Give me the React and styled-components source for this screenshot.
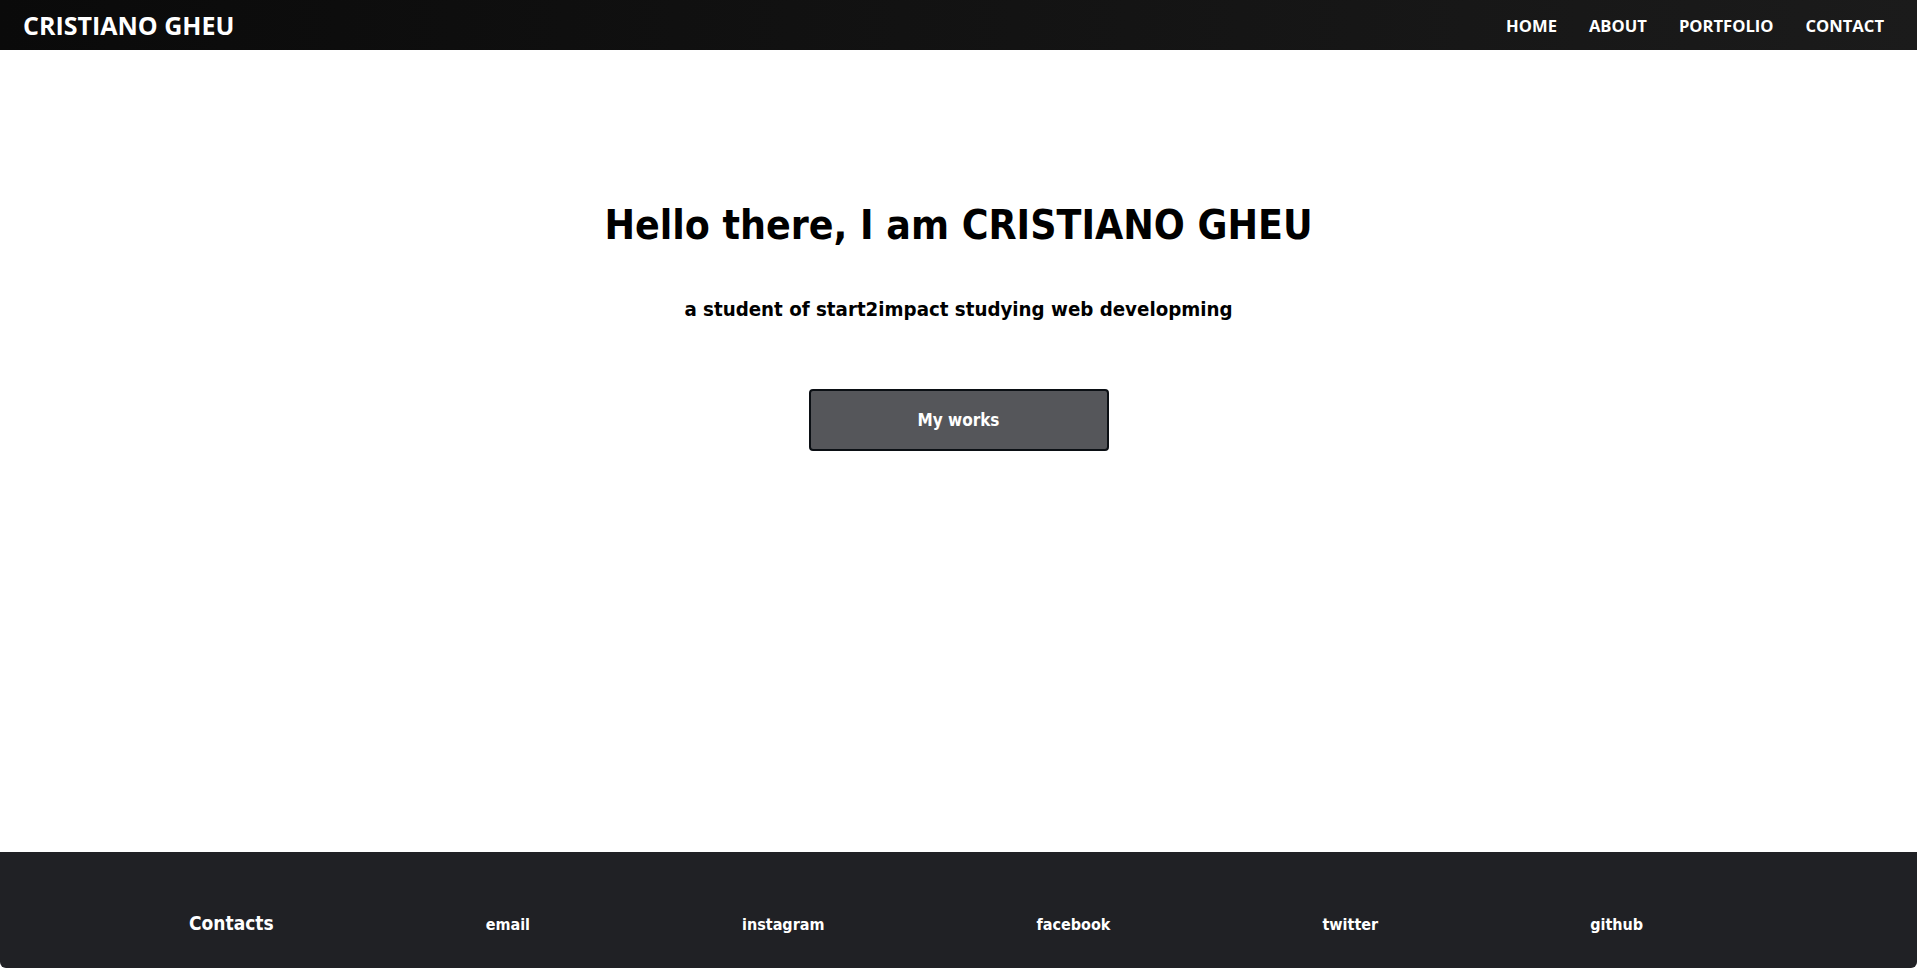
import styled, { createGlobalStyle } from 'styled-components';

const GlobalStyle = createGlobalStyle`
  html, body {
    margin: 0;
    padding: 0;
    background: #ffffff;
    font-family: "DejaVu Sans Condensed", "DejaVu Sans", "Liberation Sans", sans-serif;
  }
`;

const Page = styled.div`
  display: flex;
  flex-direction: column;
  height: 968px;
  overflow: hidden;
`;

const Header = styled.header`
  display: flex;
  align-items: center;
  justify-content: space-between;
  height: 50px;
  padding: 0 33px 0 23px;
  background: linear-gradient(to right, #0a0a0a, #1b1b1b);
  flex-shrink: 0;
  font-family: "Open Sans", "DejaVu Sans", sans-serif;
`;

const Logo = styled.div`
  color: #fff;
  font-weight: bold;
  font-size: 25px;
`;

const Nav = styled.nav`
  display: flex;
  gap: 32px;
`;

const NavLink = styled.a`
  color: #fff;
  font-weight: bold;
  font-size: 16.6px;
  text-decoration: none;
`;

const Hero = styled.main`
  flex: 1;
  display: flex;
  flex-direction: column;
  align-items: center;
  padding-top: 151px;
`;

const Title = styled.h1`
  margin: 0;
  font-size: 40.6px;
  font-weight: bold;
  color: #000;
`;

const Subtitle = styled.h3`
  margin: 48px 0 0;
  font-size: 20.3px;
  font-weight: bold;
  color: #000;
`;

const WorksButton = styled.button`
  margin-top: 68px;
  width: 300px;
  height: 62px;
  background: #55565a;
  border: 2px solid #0b0f14;
  border-radius: 4px;
  color: #fff;
  font-family: inherit;
  font-weight: bold;
  font-size: 17px;
  cursor: pointer;
`;

const Footer = styled.footer`
  flex-shrink: 0;
  height: 116px;
  box-sizing: border-box;
  background: #202125;
  display: flex;
  align-items: flex-start;
  gap: 212px;
  padding: 60px 0 0 189px;
  border-radius: 0 0 6px 6px;
`;

const FooterTitle = styled.div`
  color: #fff;
  font-weight: bold;
  font-size: 19px;
`;

const FooterLink = styled.a`
  color: #fff;
  font-weight: bold;
  font-size: 16px;
  text-decoration: none;
  margin-top: 3px;
`;

const links = ['email', 'instagram', 'facebook', 'twitter', 'github'];

export default function App() {
  return (
    <Page>
      <GlobalStyle />
      <Header>
        <Logo>CRISTIANO GHEU</Logo>
        <Nav>
          <NavLink href="#">HOME</NavLink>
          <NavLink href="#">ABOUT</NavLink>
          <NavLink href="#">PORTFOLIO</NavLink>
          <NavLink href="#">CONTACT</NavLink>
        </Nav>
      </Header>
      <Hero>
        <Title>Hello there, I am CRISTIANO GHEU</Title>
        <Subtitle>a student of start2impact studying web developming</Subtitle>
        <WorksButton>My works</WorksButton>
      </Hero>
      <Footer>
        <FooterTitle>Contacts</FooterTitle>
        {links.map(l => (
          <FooterLink href="#" key={l}>{l}</FooterLink>
        ))}
      </Footer>
    </Page>
  );
}
